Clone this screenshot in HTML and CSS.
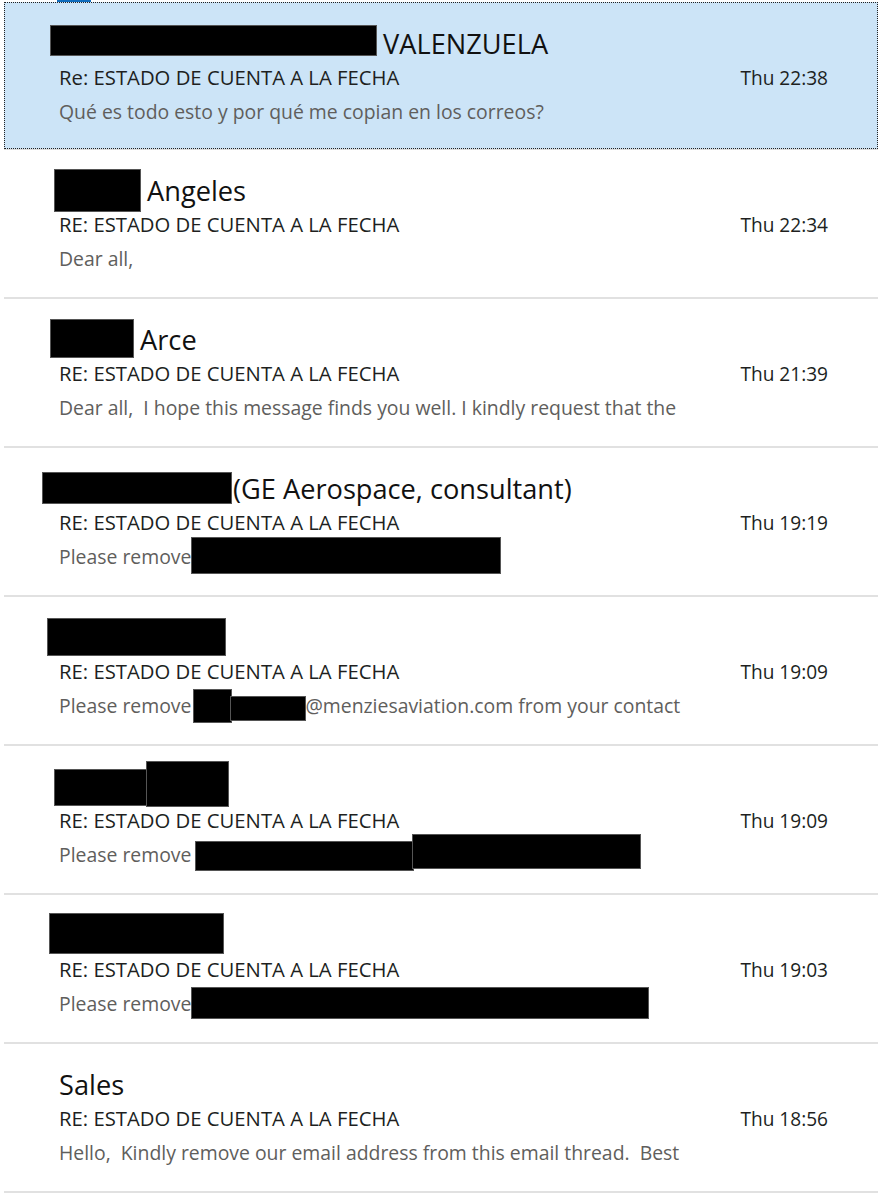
FILE: index.html
```html
<!DOCTYPE html>
<html lang="es">
<head>
<meta charset="utf-8">
<title>Mail list</title>
<link rel="stylesheet" href="styles.css">
</head>
<body>
<div class="topbar"><span class="tab"></span></div>
<ul class="list">
  <li class="item selected">
    <div class="card">
      <div class="from"><span class="redact r1"></span> VALENZUELA</div>
      <div class="line"><span class="subject">Re: ESTADO DE CUENTA A LA FECHA</span><span class="time">Thu 22:38</span></div>
      <div class="preview">Qué es todo esto y por qué me copian en los correos?</div>
    </div>
  </li>
  <li class="item">
    <div class="card">
      <div class="from"><span class="redact r2"></span> Angeles</div>
      <div class="line"><span class="subject">RE: ESTADO DE CUENTA A LA FECHA</span><span class="time">Thu 22:34</span></div>
      <div class="preview">Dear all,</div>
    </div>
  </li>
  <li class="item">
    <div class="card">
      <div class="from"><span class="redact r3"></span> Arce</div>
      <div class="line"><span class="subject">RE: ESTADO DE CUENTA A LA FECHA</span><span class="time">Thu 21:39</span></div>
      <div class="preview">Dear all,&nbsp; I hope this message finds you well. I kindly request that the</div>
    </div>
  </li>
  <li class="item">
    <div class="card">
      <div class="from"><span class="redact r4"></span>(GE Aerospace, consultant)</div>
      <div class="line"><span class="subject">RE: ESTADO DE CUENTA A LA FECHA</span><span class="time">Thu 19:19</span></div>
      <div class="preview">Please remove<span class="redact p4"></span></div>
    </div>
  </li>
  <li class="item">
    <div class="card">
      <div class="from"><span class="redact r5"></span></div>
      <div class="line"><span class="subject">RE: ESTADO DE CUENTA A LA FECHA</span><span class="time">Thu 19:09</span></div>
      <div class="preview">Please remove<span class="redact p5a"></span><span class="redact p5b"></span>@menziesaviation.com from your contact</div>
    </div>
  </li>
  <li class="item">
    <div class="card">
      <div class="from"><span class="redact r6a"></span><span class="redact r6b"></span></div>
      <div class="line"><span class="subject">RE: ESTADO DE CUENTA A LA FECHA</span><span class="time">Thu 19:09</span></div>
      <div class="preview">Please remove <span class="redact p6a"></span><span class="redact p6b"></span></div>
    </div>
  </li>
  <li class="item">
    <div class="card">
      <div class="from"><span class="redact r7"></span></div>
      <div class="line"><span class="subject">RE: ESTADO DE CUENTA A LA FECHA</span><span class="time">Thu 19:03</span></div>
      <div class="preview">Please remove<span class="redact p7"></span></div>
    </div>
  </li>
  <li class="item">
    <div class="card">
      <div class="from">Sales</div>
      <div class="line"><span class="subject">RE: ESTADO DE CUENTA A LA FECHA</span><span class="time">Thu 18:56</span></div>
      <div class="preview">Hello,&nbsp; Kindly remove our email address from this email thread.&nbsp; Best</div>
    </div>
  </li>
</ul>
</body>
</html>
```
FILE: styles.css
```css
html, body {
  margin: 0;
  padding: 0;
  background: #ffffff;
}
body {
  font-family: "Open Sans", "Noto Sans", sans-serif;
  color: #201f1e;
}
.topbar {
  height: 2px;
  padding-left: 57px;
}
.tab {
  display: block;
  width: 34px;
  height: 2px;
  background: #0f6cbd;
}
.list {
  list-style: none;
  margin: 0 8px 0 4px;
  padding: 0;
}
.item {
  height: 149px;
  box-sizing: border-box;
  border-bottom: 2px solid #e1e1e1;
}
.item.selected {
  height: 148px;
  border-bottom: 1px solid #dcdcdc;
}
.card {
  height: 100%;
  box-sizing: border-box;
  padding: 24px 50px 0 55px;
}
.selected .card {
  background: #cce4f7;
  border: 1px dotted #222;
  padding: 24px 49px 0 54px;
}
.from {
  font-size: 27.2px;
  line-height: 34px;
  height: 34px;
  color: #111;
  white-space: nowrap;
}
.line {
  display: flex;
  justify-content: space-between;
  align-items: baseline;
  line-height: 33px;
  color: #201f1e;
}
.subject {
  font-size: 20.3px;
}
.time {
  font-size: 19.1px;
}
.preview {
  font-size: 19.4px;
  line-height: 34px;
  color: #605e5c;
  white-space: nowrap;
}
.redact {
  display: inline-block;
  vertical-align: baseline;
  background: #000;
  box-shadow: 0 0 0 1px #555;
}
/* margin-bottom = how far the box hangs below the baseline; margin-top cancels the rest so the line box never grows */
.r1 { width: 325px; height: 29px; margin: -28px 0 -1px -8px; }
.r2 { width: 85px; height: 41px; margin: -31px 0 -10px -4px; }
.r3 { width: 82px; height: 37px; margin: -30px 0 -7px -8px; }
.r4 { width: 188px; height: 30px; margin: -26px 2px -4px -16px; }
.r5 { width: 177px; height: 36px; margin: -29px 0 -7px -11px; }
.r6a { width: 92px; height: 35px; margin: -27px 0 -8px -4px; }
.r6b { width: 81px; height: 44px; margin: -35px 0 -9px 0; }
.r7 { width: 173px; height: 39px; margin: -32px 0 -7px -9px; }
.p4 { width: 308px; height: 35px; margin: -26px 0 -9px 1px; }
.p5a { width: 37px; height: 32px; margin: -23px 0 -9px 3px; }
.p5b { width: 74px; height: 23px; margin: -16px 0 -7px 0; }
.p6a { width: 217px; height: 28px; margin: -20px 0 -8px 0; }
.p6b { width: 227px; height: 33px; margin: -27px 0 -6px 0; }
.p7 { width: 456px; height: 30px; margin: -23px 0 -7px 1px; }
```
